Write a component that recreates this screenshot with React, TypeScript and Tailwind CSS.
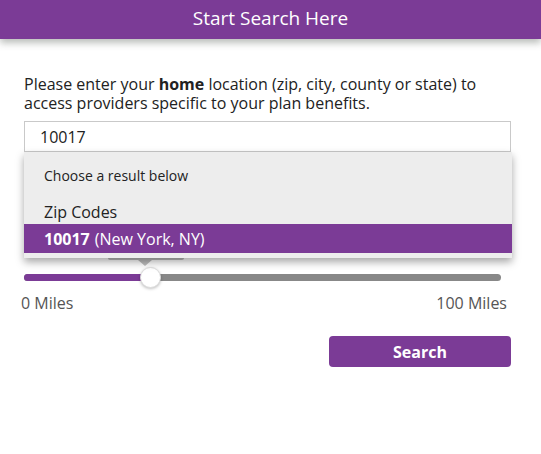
export default function App() {
  return (
    <div className="min-h-[454px] w-full bg-white font-['Open_Sans',sans-serif]">
      {/* Header */}
      <div className="flex h-[39px] items-center justify-center bg-[#7b3b96] shadow-[0_4px_7px_rgba(60,70,60,0.35)]">
        <h1 className="mt-[-2px] text-[19px] text-white">Start Search Here</h1>
      </div>

      <div className="relative flex flex-col pl-[24px] pr-[30px] pt-[36px]">
        <p className="text-[16px] leading-[19px] text-[#222]">
          Please enter your <b className="font-bold">home</b> location (zip, city, county or state) to access providers
          specific to your plan benefits.
        </p>

        <div className="relative mt-[8px]">
          <input
            readOnly
            value="10017"
            className="h-[31px] w-full border border-[#c9c9c9] bg-white px-[15px] text-[16px] text-[#222] outline-none"
          />

          {/* Autocomplete dropdown */}
          <div className="absolute left-0 right-[-1px] top-[31px] z-20 bg-[#ededed] pb-[5px] pt-[12px] shadow-[0_4px_8px_rgba(0,0,0,0.35)]">
            <div className="px-[20px] text-[14px] leading-[24px] text-[#222]">Choose a result below</div>
            <div className="mt-[12px] px-[20px] text-[16px] leading-[24px] text-[#222]">Zip Codes</div>
            <div className="flex h-[29px] items-center bg-[#7b3b96] px-[20px] text-[16px] text-white">
              <span className="font-bold">10017</span>
              <span className="ml-[5px]">(New York, NY)</span>
            </div>
          </div>
        </div>

        {/* Distance slider */}
        <div className="relative mr-[10px] mt-[122px] h-[7px] rounded-full bg-[#888]">
          <div className="absolute left-0 top-0 h-[7px] w-[126px] rounded-l-full bg-[#7b3b96]" />
          <div className="absolute left-[84px] top-[-26px] h-[12px] w-[76px] rounded-[2px] bg-[#bdbdbd]" />
          <div className="absolute left-[114px] top-[-14px] h-0 w-0 border-x-[7px] border-t-[6px] border-x-transparent border-t-[#bdbdbd]" />
          <div className="absolute left-[116px] top-[-7px] h-[21px] w-[21px] rounded-full border border-[#ddd] bg-white shadow-[0_1px_3px_rgba(0,0,0,0.25)]" />
        </div>

        <div className="ml-[-3px] mr-[4px] mt-[12px] flex justify-between text-[16px] leading-[20px] text-[#555]">
          <span>0 Miles</span>
          <span>100 Miles</span>
        </div>

        <button className="mt-[23px] h-[31px] w-[182px] self-end rounded-[4px] bg-[#7b3b96] text-[16px] font-bold text-white">
          Search
        </button>
      </div>
    </div>
  );
}
